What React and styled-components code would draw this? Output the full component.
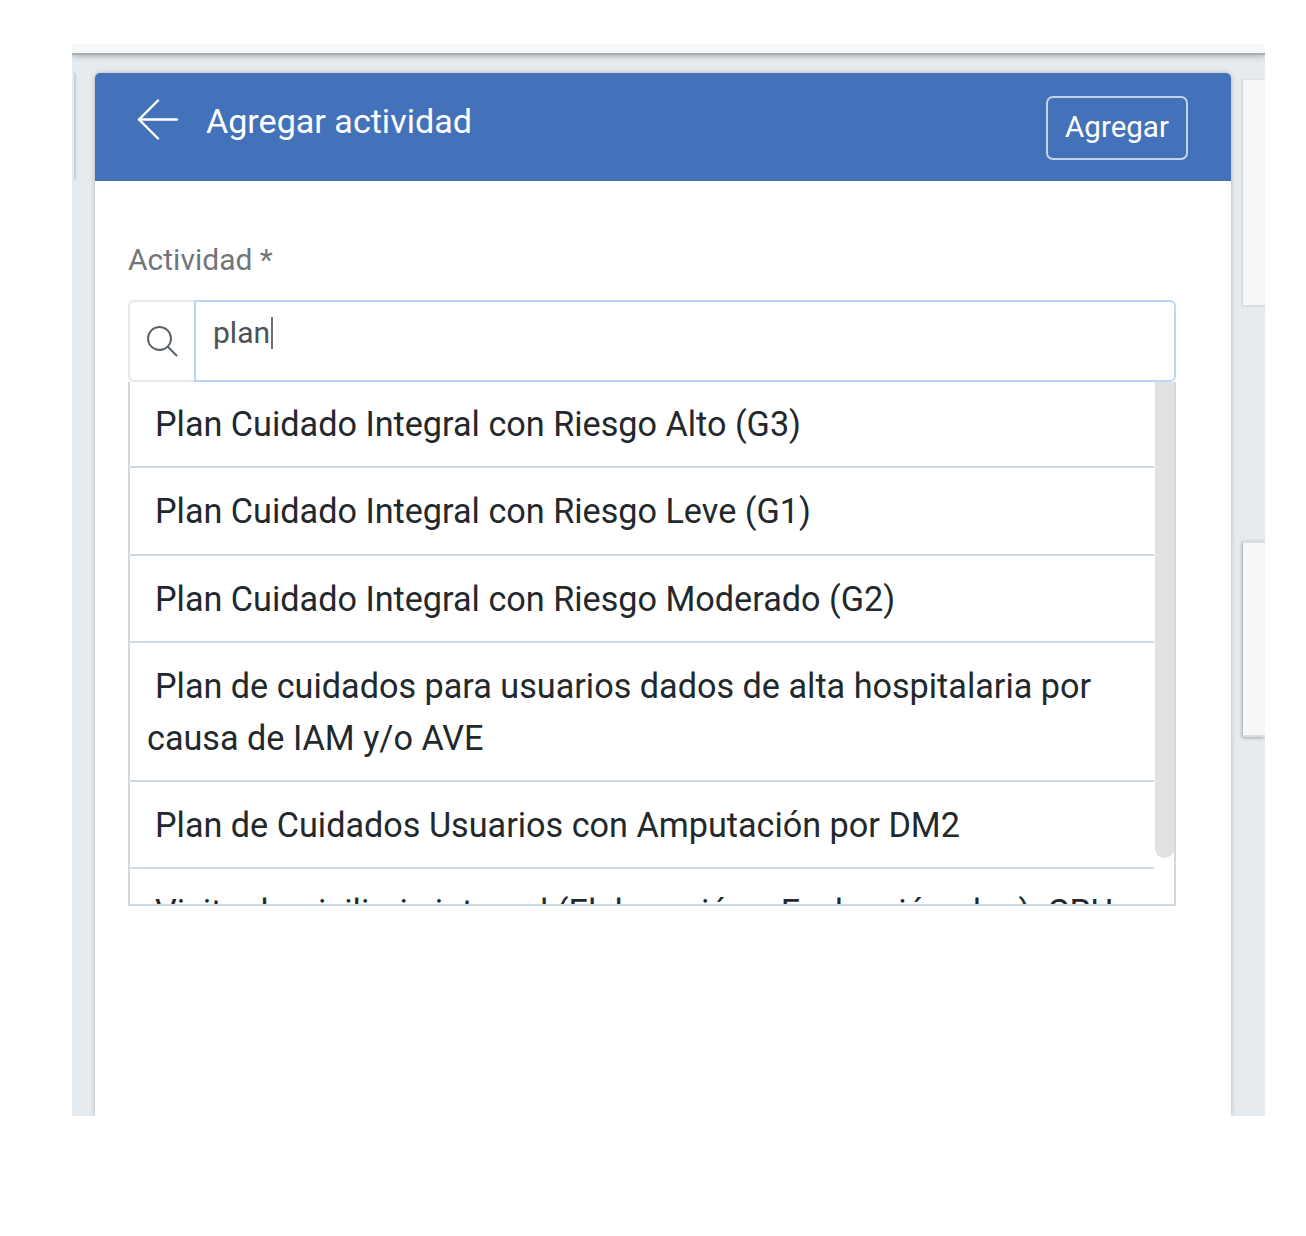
import React from 'react'
import styled, { createGlobalStyle } from 'styled-components'

const GlobalStyle = createGlobalStyle`
  html, body {
    margin: 0;
    padding: 0;
    background: #ffffff;
  }
  body {
    font-family: Roboto, "Liberation Sans", sans-serif;
  }
`

const items = [
  'Plan Cuidado Integral con Riesgo Alto (G3)',
  'Plan Cuidado Integral con Riesgo Leve (G1)',
  'Plan Cuidado Integral con Riesgo Moderado (G2)',
  'Plan de cuidados para usuarios dados de alta hospitalaria por causa de IAM y/o AVE',
  'Plan de Cuidados Usuarios con Amputación por DM2',
  'Visita domiciliaria integral (Elaboración y Evaluación plan)\u00a0 CRU'
]

const BackIcon = () => (
  <svg width="42" height="42" viewBox="0 0 42 42" fill="none" stroke="#ffffff" strokeWidth="2.4" strokeLinecap="round" strokeLinejoin="round">
    <path d="M40 20.5H2" />
    <path d="M21 1.5L2 20.5L21 39.5" />
  </svg>
)

const SearchIcon = () => (
  <svg width="32" height="32" viewBox="0 0 32 32" fill="none" stroke="#5c6368" strokeWidth="2" strokeLinecap="round">
    <circle cx="13.5" cy="13.5" r="11.5" />
    <path d="M22 22l8.5 8.5" />
  </svg>
)

export default function App() {
  return (
    <Page>
      <GlobalStyle />
      <Frame>
        <TopBand />
        <Stage>
          <SideSliver />
          <Panel>
            <Header>
              <HeaderLeft>
                <BackIcon />
                <Title>Agregar actividad</Title>
              </HeaderLeft>
              <AddButton>Agregar</AddButton>
            </Header>
            <Body>
              <Label>Actividad *</Label>
              <SearchField>
                <SearchAddon>
                  <SearchIcon />
                </SearchAddon>
                <SearchInput>
                  plan<Caret />
                </SearchInput>
              </SearchField>
              <Results>
                <ResultList>
                  {items.map(item => (
                    <ResultItem key={item}>{item}</ResultItem>
                  ))}
                </ResultList>
                <ScrollThumb />
              </Results>
            </Body>
          </Panel>
          <RightColumn>
            <RightCardTop />
            <RightCardMiddle />
            <RightCardBottom />
          </RightColumn>
        </Stage>
      </Frame>
    </Page>
  )
}

const Page = styled.div`
  width: 1306px;
  height: 1236px;
  padding: 44px 41px 120px 72px;
  box-sizing: border-box;
  background: #ffffff;
  overflow: hidden;
`

const Frame = styled.div`
  height: 1072px;
  display: flex;
  flex-direction: column;
  overflow: hidden;
  background: #e6ebef;
`

const TopBand = styled.div`
  height: 9px;
  flex: none;
  background: #f4f8fb;
  border-bottom: 2px solid #a9aeb1;
  box-shadow: 0 2px 5px rgba(120, 125, 130, 0.45);
`

const Stage = styled.div`
  flex: 1;
  min-height: 0;
  display: flex;
  padding: 18px 0 6px;
  margin-bottom: -6px;
`

const SideSliver = styled.div`
  width: 2px;
  height: 107px;
  margin-right: 21px;
  flex: none;
  background: #e9ebed;
  box-shadow: 1px 0 3px rgba(90, 95, 100, 0.45);
`

const Panel = styled.div`
  width: 1136px;
  flex: none;
  display: flex;
  flex-direction: column;
  background: #ffffff;
  border-radius: 5px 5px 0 0;
  box-shadow: 0 0 5px rgba(90, 95, 100, 0.4);
`

const Header = styled.div`
  height: 108px;
  flex: none;
  box-sizing: border-box;
  display: flex;
  align-items: flex-start;
  justify-content: space-between;
  padding: 22px 43px 0 42px;
  background: #4472ba;
  border-radius: 5px 5px 0 0;
`

const HeaderLeft = styled.div`
  display: flex;
  align-items: center;
  gap: 27px;
  height: 50px;
`

const Title = styled.div`
  padding-top: 2px;
  font-size: 34.1px;
  line-height: 50px;
  color: #ffffff;
`

const AddButton = styled.button`
  width: 142px;
  height: 64px;
  margin-top: 1px;
  padding: 0 0 2px;
  background: transparent;
  border: 2px solid #c5d3e8;
  border-radius: 7px;
  font-family: inherit;
  font-size: 29.5px;
  color: #ffffff;
`

const Body = styled.div`
  padding: 57px 55px 0 33px;
`

const Label = styled.div`
  font-size: 30px;
  line-height: 44px;
  color: #737678;
  margin-bottom: 18px;
`

const SearchField = styled.div`
  display: flex;
  height: 82px;
`

const SearchAddon = styled.div`
  width: 66px;
  flex: none;
  box-sizing: border-box;
  display: flex;
  align-items: center;
  justify-content: center;
  padding-bottom: 1px;
  background: #ffffff;
  border: 2px solid #e6e9ec;
  border-right: 0;
  border-radius: 6px 0 0 6px;
`

const SearchInput = styled.div`
  flex: 1;
  box-sizing: border-box;
  padding: 9px 17px;
  font-size: 30px;
  line-height: 44px;
  color: #4c5256;
  border: 2px solid #bcd6f7;
  border-radius: 0 6px 6px 0;
`

const Caret = styled.span`
  display: inline-block;
  width: 2px;
  height: 32px;
  margin-left: 1px;
  vertical-align: -6px;
  background: #6d7275;
`

const Results = styled.div`
  position: relative;
  height: 524px;
  box-sizing: border-box;
  overflow: hidden;
  border: 2px solid #d0d9e0;
  border-top: 0;
`

const ResultList = styled.div`
  margin: -1px 20px 0 0;
`

const ResultItem = styled.div`
  box-sizing: border-box;
  padding: 17px 16px 16.3px 17px;
  font-size: 34.2px;
  line-height: 52px;
  color: #23282c;
  border-bottom: 2px solid #d0d9e0;
  text-indent: 8px;
`

const ScrollThumb = styled.div`
  position: absolute;
  top: 0;
  right: 0;
  width: 19px;
  height: 476px;
  background: #e1e1e1;
  border-radius: 0 0 10px 10px;
`

const RightColumn = styled.div`
  flex: 1;
  margin-left: 12px;
  padding-top: 7px;
  display: flex;
  flex-direction: column;
`

const RightCardTop = styled.div`
  height: 225px;
  background: #f7f7f7;
  border-bottom: 2px solid #d9dde0;
  box-shadow: -1px 0 2px rgba(120, 125, 130, 0.25);
`

const RightCardMiddle = styled.div`
  height: 234px;
  background: #e6ebef;
`

const RightCardBottom = styled.div`
  height: 192px;
  background: #f7f7f7;
  border-top: 2px solid #d9dde0;
  border-bottom: 2px solid #d9dde0;
  box-shadow: -1px 1px 3px rgba(90, 95, 100, 0.5);
`
